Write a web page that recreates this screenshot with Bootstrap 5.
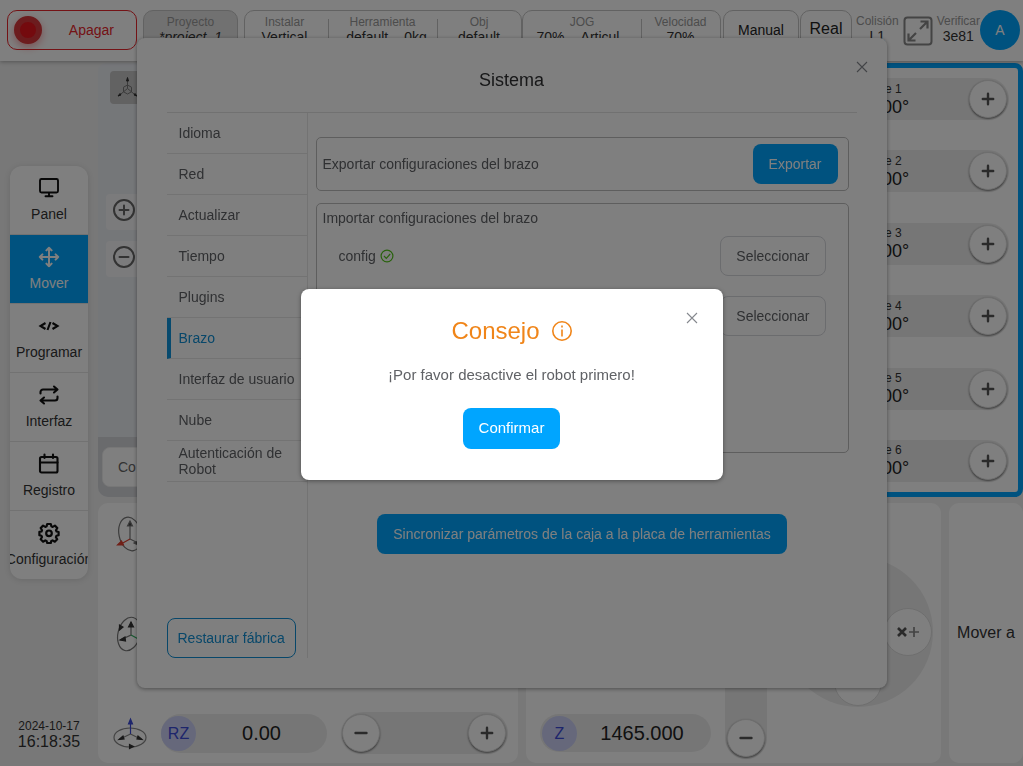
<!DOCTYPE html>
<html lang="es">
<head>
<meta charset="utf-8">
<meta name="viewport" content="width=device-width, initial-scale=1">
<title>Sistema</title>
<link href="https://cdn.jsdelivr.net/npm/bootstrap@5.3.0/dist/css/bootstrap.min.css" rel="stylesheet">
<style>
:root{--accent:#00a5ff;--line:#c4c4c4;--track:#ededed}
body{font:14px/18px "Liberation Sans",Arial,sans-serif;color:#333;background:#f0f0f0}
svg{display:block;flex:none}
.topbar{height:61px;padding:10px 3px 10px 7px;background:#fff;box-shadow:0 1px 4px rgba(0,0,0,.3);position:relative}
.topbar button,.cell-group{height:40px;border-radius:10px;flex:none}
.cell-group{border:1px solid var(--line)}
.cell{text-align:center;line-height:15px;padding-top:4px;white-space:nowrap}
.cell+.cell{position:relative}
.cell+.cell::before{content:"";position:absolute;left:0;top:8px;height:24px;border-left:1px solid var(--line)}
.cell small{display:block;font-size:12px;color:#999}
.power{width:130px;border:1px solid #e8262c;background:#fff;color:#e8262c;padding:0 22px 0 6px}
.lamp{width:28px;height:28px;border-radius:50%;background:#e8141c;border:6px solid #d8383c;box-shadow:0 3px 8px rgba(230,20,30,.4)}
.plainbtn{border:1px solid var(--line);background:#fff;color:#222}
.avatar{width:40px;background:var(--accent);color:#fff;border:0;border-radius:50%!important}
.side{width:98px;flex:none;padding:105px 10px 16px}
.menu{background:#fff;border-radius:12px;overflow:hidden;box-shadow:0 1px 6px rgba(0,0,0,.12)}
.menu a{height:69px;display:flex;flex-direction:column;align-items:center;gap:6px;padding-top:11px;color:#333;text-decoration:none;border-bottom:1px solid #e4e4e4;white-space:nowrap}
.menu a:last-child{border:0;height:68px}
.menu a.active{background:var(--accent);color:#fff}
.menu svg{color:#111}.menu .active svg{color:#fff}
.scene{background:#ebeef3;border-radius:8px 0 0 10px;overflow:hidden;margin-top:2px}
.tile{width:60px;height:36px;border:0;border-radius:4px;background:#f7f7f9;color:#666;padding:0 0 4px 7px}
.tile-dark{height:33px;background:#c4c4c4;color:#777;padding-bottom:0}
.scene-foot{height:60px;background:#d4d6da;padding:10px 4px}
.scene-foot button{width:120px;height:40px;border:1px solid #eee;border-radius:8px;background:#fff;color:#666;text-align:left;padding:0 15px}
.joints{width:270px;flex:none;border:5px solid var(--accent);border-radius:8px;background:#fff;margin-top:2px;padding:10px 9px 10px}
.pill{background:var(--track);border-radius:21px;height:42px}
.joint{padding:0 2px 0 40px}
.knob{width:38px;height:38px;border-radius:50%;border:1px solid #ddd;background:#fff;box-shadow:0 1px 2px rgba(0,0,0,.5);padding:0;color:#555;flex:none;display:flex;align-items:center;justify-content:center}
.num{font-size:20px;line-height:24px;color:#222}
.joint .num{font-size:18px;line-height:20px}
.lower{height:260px;flex:none;display:grid;grid-template-columns:420fr 415fr 74fr;gap:8px}
.panel{background:#fff;border-radius:10px;min-width:0}
.tag{width:35px;height:35px;border-radius:50%;background:#ccd1f7;color:#3c4bd8;font-size:16px;line-height:35px;text-align:center;flex:none}
.axisrow{height:40px}
.lift{width:42px;background:var(--track);border-radius:21px;padding:2px}
.dial{width:150px;height:150px;border-radius:50%;background:var(--track);display:grid;grid-template-columns:repeat(3,50px);grid-template-rows:repeat(3,50px)}
.dial button{width:48px;height:48px;border-radius:50%;border:1px solid #ddd;background:#fff;padding:0;color:#555;place-self:center;display:grid;place-items:center}
/* dialogs */
.sys{z-index:1040}.shade{position:fixed;inset:0;background:rgba(0,0,0,.5);z-index:1045}.tip{z-index:1055}
.sys .modal-dialog{max-width:750px;margin:38px auto}
.modal-content{border:0;border-radius:8px;box-shadow:0 1px 4px rgba(0,0,0,.4);font-size:14px;color:#606266}
.sys .modal-content{min-height:650px;padding:0 30px 30px}
.close-x{position:absolute;border:0;background:none;padding:0;color:#85888e}
.sys .close-x{right:19px;top:23px}.tip .close-x{right:25px;top:23px}
.sys h1{font-size:18px;line-height:24px;margin:0;padding:30px 0 20px;text-align:center;color:#303133;border-bottom:1px solid #e2e2e2}
.tabs{width:141px;flex:none;border-right:1px solid #e6e6e6}
.tabs a{display:flex;align-items:center;height:41px;line-height:16px;padding:0 10px 0 12px;color:#606266;text-decoration:none;border-bottom:1px solid #e6e6e6}
.tabs a.nowr{white-space:nowrap}
.tabs a.active{color:#108fd4;border-left:4px solid #0f94dc;padding-left:8px}
.act{height:40px;border:0;border-radius:8px;background:var(--accent);color:#fff;padding:0 16px;white-space:nowrap}
.act-line{background:#fff;color:#108fd4;border:1px solid #108fd4;padding:0 10px}
.act-soft{background:#fff;color:#606266;border:1px solid #d6d8dd;padding:0 15px}
.box{border:1px solid #bcbcbc;border-radius:5px}
.tip .modal-dialog{max-width:422px;padding-top:2px}
.tip .modal-content{padding:28px 20px 31px;align-items:center}
.tip h2{font-size:24px;line-height:28px;color:#f08519;margin:0 0 20px}
.tip p{font-size:15px;line-height:20px;margin:0 0 23px}
.tip .act{height:41px;font-size:15px}
</style>
<script src="https://cdn.jsdelivr.net/npm/bootstrap@5.3.0/dist/js/bootstrap.bundle.min.js"></script>
</head>
<body>
<svg width="0" height="0" class="position-absolute" aria-hidden="true">
  <symbol id="plus" viewBox="0 0 14 14"><path d="M7 1.800v10.400M1.800 7h10.400" stroke="currentColor" stroke-width="2.4" stroke-linecap="round"/></symbol>
  <symbol id="minus" viewBox="0 0 14 14"><path d="M1.500 7h11" stroke="currentColor" stroke-width="2.4" stroke-linecap="round"/></symbol>
  <symbol id="cross" viewBox="0 0 12 12"><path d="M1 1l10 10M11 1L1 11" stroke="currentColor" stroke-width="1.1"/></symbol>
</svg>
<div class="min-vh-100 d-flex flex-column">
  <header class="topbar d-flex">
    <button class="power d-flex align-items-center justify-content-between"><span class="lamp"></span>Apagar</button>
    <div class="cell-group cell" style="width:95px;margin-left:6px;background:#e2e2e2"><small>Proyecto</small><i>*project_1</i></div>
    <div class="cell-group d-flex" style="width:278px;margin-left:6px">
      <div class="cell pe-1" style="width:83px"><small>Instalar</small>Vertical</div>
      <div class="cell" style="width:109px"><small>Herramienta</small><span class="ps-2">default</span><span class="ms-3">0kg</span></div>
      <div class="cell" style="width:84px"><small>Obj</small>default</div>
    </div>
    <div class="cell-group d-flex" style="width:199px">
      <div class="cell" style="width:118px"><small>JOG</small>70%<span class="ms-3 pe-2">Articul</span></div>
      <div class="cell" style="width:79px"><small>Velocidad</small>70%</div>
    </div>
    <button class="plainbtn" style="width:76px;margin-left:2px">Manual</button>
    <button class="plainbtn pb-1 fs-6" style="width:52px;margin-left:1px">Real</button>
    <div class="cell ms-1"><small>Colisión</small>L1</div>
    <svg class="mx-auto align-self-center" width="30" height="30" viewBox="0 0 30 30" fill="none" stroke="#888" stroke-width="2"><rect x="1.500" y="1.500" width="27" height="27" rx="3"/><path d="M17.500 5.500H24.500V12.500M24 6l-7 7M5.500 17.500v7h7M6 24l7-7" stroke-width="2.200"/></svg>
    <div class="cell"><small>Verificar</small>3e81</div>
    <button class="avatar">A</button>
  </header>

  <div class="d-flex flex-grow-1">
    <aside class="side d-flex flex-column justify-content-between">
      <nav class="menu">
        <a href="#"><svg width="22" height="22" viewBox="0 0 22 22" fill="none" stroke="currentColor" stroke-width="1.900" stroke-linecap="round"><rect x="2" y="2" width="18" height="13.500" rx="1.500"/><path d="M11 16v3M7.500 19.200h7"/></svg>Panel</a>
        <a href="#" class="active"><svg width="22" height="22" viewBox="0 0 22 22" fill="none" stroke="currentColor" stroke-width="2" stroke-linecap="round" stroke-linejoin="round"><path d="M11 1.800v18.400M1.800 11h18.400M8.400 4.400L11 1.800l2.600 2.600M8.400 17.600L11 20.200l2.600-2.600M4.400 8.400L1.800 11l2.600 2.600M17.600 8.400l2.600 2.600-2.600 2.600"/></svg>Mover</a>
        <a href="#"><svg width="22" height="22" viewBox="0 0 22 22" fill="none" stroke="currentColor" stroke-width="2.100"><path d="M7.500 8L2.500 11l5 3M14.500 8l5 3-5 3M12.500 7l-3 8"/></svg>Programar</a>
        <a href="#"><svg width="22" height="22" viewBox="0 0 22 22" fill="none" stroke="currentColor" stroke-width="2.100" stroke-linecap="round" stroke-linejoin="round"><path d="M2.500 9.500V8A2.500 2.500 0 0 1 5 5.500h14M16 2.500l3.500 3-3.500 3M19.500 12.500V14a2.500 2.500 0 0 1-2.500 2.500H3M6 13.500l-3.500 3 3.500 3"/></svg>Interfaz</a>
        <a href="#"><svg width="22" height="22" viewBox="0 0 22 22" fill="none" stroke="currentColor" stroke-width="2.100" stroke-linecap="round"><rect x="2" y="4" width="17.500" height="15.500" rx="1.500"/><path d="M2 9.500h17.500M6.500 1.500V5M15 1.500V5"/></svg>Registro</a>
        <a href="#"><svg width="22" height="22" viewBox="0 0 22 22" fill="none" stroke="currentColor" stroke-width="2.200" stroke-linejoin="round"><path d="M9.200 2h3.600l.6 2.300 1.300.6 2.200-1.300 2.400 2.400-1.300 2.200.6 1.300 2 .5v3.200l-2.100.6-.6 1.300 1.300 2.200-2.400 2.400-2.200-1.300-1.300.6-.5 2H9.200l-.6-2-1.300-.6-2.200 1.300-2.400-2.400L4 15l-.6-1.200-2-.6V9.900l2.100-.4L4 8.200 2.700 6l2.400-2.400 2.200 1.300 1.300-.6z"/><circle cx="11" cy="11.300" r="2.800"/></svg>Configuración</a>
      </nav>
      <time class="text-center" style="line-height:15px"><span class="d-block" style="font-size:12px">2024-10-17</span><span class="fs-6" style="line-height:15px">16:18:35</span></time>
    </aside>

    <main class="flex-grow-1 d-flex flex-column" style="min-width:0;padding-bottom:3px;gap:6px">
      <section class="d-flex flex-grow-1">
        <div class="scene flex-grow-1 d-flex flex-column">
          <div class="d-flex flex-column align-items-start flex-grow-1 ps-2">
            <button class="tile tile-dark mt-2 ms-1" aria-label="Vista"><svg width="21" height="24" viewBox="0 0 21 24" fill="none" stroke="currentColor"><path d="M10.500 2v10.500L1.500 20M10.500 12.500L19.500 20M10.500 9l4 2.200v4.600l-4 2.200-4-2.200v-4.600z"/><path d="M9.500 5l1-3.500 1 3.500zM1 20l2-2.500 1 1.500zM20 20l-2-2.500-1 1.500z" fill="#333" stroke="#333"/></svg></button>
            <button class="tile" style="margin-top:90px" aria-label="Acercar"><svg width="22" height="22" viewBox="0 0 22 22" fill="none" stroke="currentColor" stroke-width="2" stroke-linecap="round"><circle cx="11" cy="11" r="10"/><path d="M11 6.500v9M6.500 11h9"/></svg></button>
            <button class="tile" style="margin-top:11px" aria-label="Alejar"><svg width="22" height="22" viewBox="0 0 22 22" fill="none" stroke="currentColor" stroke-width="2" stroke-linecap="round"><circle cx="11" cy="11" r="10"/><path d="M6.500 11h9"/></svg></button>
          </div>
          <div class="scene-foot"><button>Co</button></div>
        </div>
        <div class="joints d-flex flex-column justify-content-between" id="joints"></div>
      </section>

      <section class="lower">
        <div class="panel d-flex flex-column justify-content-between" style="padding:10px 0 10px 15px">
          <svg width="34" height="44" viewBox="0 0 34 44" fill="none" stroke="#777" stroke-width="1.200"><ellipse cx="17" cy="21" rx="11" ry="17" transform="rotate(-12 17 21)"/><path d="M17 9v17l8 4"/><path d="M17 26l-9 5" stroke="#e04030"/><path d="M14.500 13l2.500-5 2.500 5z" fill="#444"/><path d="M4.500 32l4-4 2 4z" fill="#e04030" stroke="#e04030"/><path d="M21 30l6-3v6z" fill="#444"/></svg>
          <svg width="34" height="44" viewBox="0 0 34 44" fill="none" stroke="#777" stroke-width="1.200"><ellipse cx="16" cy="21" rx="11" ry="17" transform="rotate(14 16 21)"/><path d="M18 9v13l-11 5"/><path d="M18 22l11 6" stroke="#30b060"/><path d="M15.500 14l2.500-5 2.500 5zM7 27l5-3 .5 4zM6.500 12l3.500 2-3.500 3z" fill="#333" stroke="#333"/></svg>
          <div class="axisrow d-flex align-items-center">
            <svg width="34" height="34" viewBox="0 0 34 34" fill="none" stroke="#888" stroke-width="1.200"><ellipse cx="17" cy="21.500" rx="16" ry="9.500"/><path d="M17.500 18L7 23M17.500 18l10 5"/><path d="M17.500 18V6" stroke="#3c4bd8"/><path d="M15.500 8l2-5 2 5z" fill="#3c4bd8" stroke="#3c4bd8"/><path d="M6 23.500l4-3.500 1 3zM29 23.500L25 20l-1 3zM16.500 28.500l4 2-4 2z" fill="#333" stroke="#333"/></svg>
            <div class="pill d-flex align-items-center" style="width:166px;height:39px;margin-left:14px"><span class="tag">RZ</span><span class="num flex-grow-1 text-center">0.00</span></div>
            <div class="pill d-flex align-items-center justify-content-between" style="width:166px;margin-left:15px;padding-right:2px"><button class="knob" aria-label="RZ menos"><svg width="14" height="14"><use href="#minus"/></svg></button><button class="knob" aria-label="RZ más"><svg width="14" height="14"><use href="#plus"/></svg></button></div>
          </div>
        </div>
        <div class="panel d-flex align-items-end" style="padding:0 8px 4px 14px">
          <div class="pill d-flex align-items-center" style="width:171px;height:38px;padding-left:2px;margin-bottom:7px"><span class="tag">Z</span><span class="num flex-grow-1 text-center pe-1">1465.000</span></div>
          <div class="lift d-flex align-items-end" style="height:180px;margin-left:14px"><button class="knob" aria-label="Z menos"><svg width="14" height="14"><use href="#minus"/></svg></button></div>
          <div class="dial ms-auto" style="margin-bottom:52px">
            <button style="grid-area:2/3" aria-label="X más"><svg width="24" height="14" viewBox="0 0 24 14" fill="none" stroke="currentColor"><path d="M2 3l8 8M10 3l-8 8" stroke-width="2.600"/><path d="M18 2v10M13 7h10" stroke="#888" stroke-width="1.700"/></svg></button>
            <button style="grid-area:3/2" aria-label="Y menos"><svg width="24" height="14" viewBox="0 0 24 14" fill="none" stroke="currentColor"><path d="M2 2l4 5M10 2L4 12" stroke-width="2.200"/><path d="M13 7h9" stroke-width="1.700"/></svg></button>
          </div>
        </div>
        <div class="panel d-flex align-items-center justify-content-center fs-6" style="white-space:nowrap">Mover a</div>
      </section>
    </main>
  </div>
</div>

<div class="modal d-block sys" role="dialog" aria-labelledby="sysTitle">
  <div class="modal-dialog"><div class="modal-content">
    <button class="close-x" aria-label="Cerrar"><svg width="12" height="12"><use href="#cross"/></svg></button>
    <h1 id="sysTitle">Sistema</h1>
    <div class="d-flex flex-grow-1">
      <nav class="tabs d-flex flex-column">
        <a href="#">Idioma</a><a href="#">Red</a><a href="#">Actualizar</a><a href="#">Tiempo</a><a href="#">Plugins</a><a href="#" class="active">Brazo</a><a href="#" class="nowr">Interfaz de usuario</a><a href="#">Nube</a><a href="#">Autenticación de Robot</a>
        <button class="act act-line mt-auto align-self-start">Restaurar fábrica</button>
      </nav>
      <div class="flex-grow-1 d-flex flex-column" style="padding:24px 8px 0">
        <div class="box d-flex align-items-center justify-content-between" style="height:54px;padding:0 10px 0 6px">Exportar configuraciones del brazo<button class="act">Exportar</button></div>
        <div class="box" style="height:250px;margin-top:12px;padding:5px 22px 0 6px">
          <div>Importar configuraciones del brazo</div>
          <div class="d-flex align-items-center ps-3" style="margin-top:9px"><span>config</span>
            <svg class="ms-1" width="14" height="14" viewBox="0 0 14 14" fill="none" stroke="#52c41a" stroke-width="1.200"><circle cx="7" cy="7" r="5.900"/><path d="M4 7l2.300 2.300L10.200 5"/></svg>
            <button class="act act-soft ms-auto">Seleccionar</button></div>
          <div class="d-flex" style="margin-top:20px"><button class="act act-soft ms-auto">Seleccionar</button></div>
        </div>
        <button class="act align-self-center" style="margin-top:61px">Sincronizar parámetros de la caja a la placa de herramientas</button>
      </div>
    </div>
  </div></div>
</div>
<div class="shade"></div>
<div class="modal d-block tip" role="alertdialog" aria-labelledby="tipTitle">
  <div class="modal-dialog modal-dialog-centered"><div class="modal-content">
    <button class="close-x" aria-label="Cerrar"><svg width="12" height="12"><use href="#cross"/></svg></button>
    <h2 id="tipTitle" class="d-flex align-items-center">Consejo<svg style="margin-left:12px" width="20" height="20" viewBox="0 0 20 20" fill="none" stroke="#f08519" stroke-width="1.600"><circle cx="10" cy="10" r="9.200"/><path d="M10 8.500v7M10 4.500v2"/></svg></h2>
    <p>¡Por favor desactive el robot primero!</p>
    <button class="act">Confirmar</button>
  </div></div>
</div>
<script>
document.getElementById('joints').innerHTML = [1,2,3,4,5,6].map(n =>
  `<div class="pill joint d-flex align-items-center"><div class="flex-grow-1 text-center" style="line-height:15px"><div style="font-size:12px">Eje ${n}</div><div class="num">0.00°</div></div><button class="knob" aria-label="Eje ${n} más"><svg width="14" height="14"><use href="#plus"/></svg></button></div>`).join('');
</script>
</body>
</html>
